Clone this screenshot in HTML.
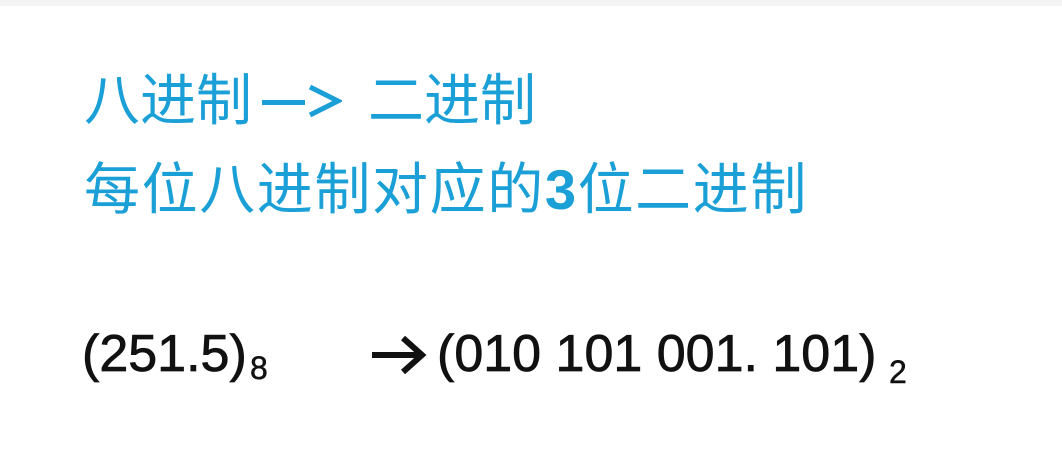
<!DOCTYPE html>
<html><head><meta charset="utf-8"><style>
html,body{margin:0;padding:0;background:#fff;width:1062px;height:474px;overflow:hidden;position:relative}
.c{position:absolute;font-family:"Liberation Sans","Noto Sans CJK SC",sans-serif;color:#1a9fd6;font-size:56px;line-height:1;white-space:nowrap}
.k{position:absolute;font-family:"Liberation Sans",sans-serif;color:#111;font-size:52px;line-height:1;white-space:nowrap;-webkit-text-stroke:0.8px #111}
.s{position:absolute;font-family:"Liberation Sans",sans-serif;color:#111;font-size:32px;line-height:1;-webkit-text-stroke:0.5px #111}
</style></head><body>
<div style="position:absolute;left:0;top:0;width:1062px;height:6px;background:#f4f4f4"></div>
<div class="c" style="left:84px;top:73px">八进制</div>
<div style="position:absolute;left:262px;top:100px;width:43px;height:5px;background:#1a9fd6"></div>
<svg style="position:absolute;left:306px;top:84px" width="36" height="36"><path d="M4 3 L32 17 L4 31" fill="none" stroke="#1a9fd6" stroke-width="5"/></svg>
<div class="c" style="left:368px;top:73px">二进制</div>
<div class="c" style="left:84px;top:162px;letter-spacing:1.6px">每位八进制对应的<b>3</b>位二进制</div>
<div class="k" style="left:82px;top:328px">(251.5)</div>
<div class="s" style="left:250px;top:352px">8</div>
<svg style="position:absolute;left:370px;top:334px" width="58" height="42"><path d="M2 21 H52 M33 4 L52 21 L33 38" fill="none" stroke="#111" stroke-width="6"/></svg>
<div class="k" style="left:437px;top:328px">(010 101 001. 101)</div>
<div class="s" style="left:889px;top:356px">2</div>
</body></html>
